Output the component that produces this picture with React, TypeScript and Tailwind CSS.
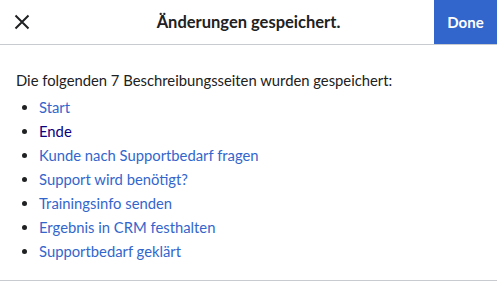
const pages = [
  { title: "Start", visited: false },
  { title: "Ende", visited: true },
  { title: "Kunde nach Supportbedarf fragen", visited: false },
  { title: "Support wird benötigt?", visited: false },
  { title: "Trainingsinfo senden", visited: false },
  { title: "Ergebnis in CRM festhalten", visited: false },
  { title: "Supportbedarf geklärt", visited: false },
];

export default function App() {
  return (
    <div className="w-[497px] bg-white font-['Lato',sans-serif] text-[#202122]">
      <div className="relative flex h-[45px] items-center justify-center border-b border-[#c8ccd1]">
        <button type="button" className="absolute left-0 top-0 flex h-[44px] w-[44px] items-center justify-center">
          <svg width="16" height="16" viewBox="0 0 16 16">
            <path d="M1.5 1.5L14.5 14.5M14.5 1.5L1.5 14.5" stroke="#202122" strokeWidth="2" />
          </svg>
        </button>
        <h1 className="text-[16.5px] font-bold">Änderungen gespeichert.</h1>
        <button
          type="button"
          className="absolute right-0 top-0 h-[44px] w-[63px] bg-[#3366cc] text-[15px] font-bold text-white"
        >
          Done
        </button>
      </div>

      <div className="border-b border-[#c8ccd1] px-4 pb-[17px] pt-[23px] text-[14.8px]">
        <p className="leading-[24px]">Die folgenden 7 Beschreibungsseiten wurden gespeichert:</p>
        <ul className="mt-[3px] list-disc pl-[23px] marker:text-[#202122]">
          {pages.map((p) => (
            <li key={p.title} className="leading-[24px]">
              <a href="#" className={p.visited ? "text-[#0b0080]" : "text-[#3366cc]"}>
                {p.title}
              </a>
            </li>
          ))}
        </ul>
      </div>
    </div>
  );
}
